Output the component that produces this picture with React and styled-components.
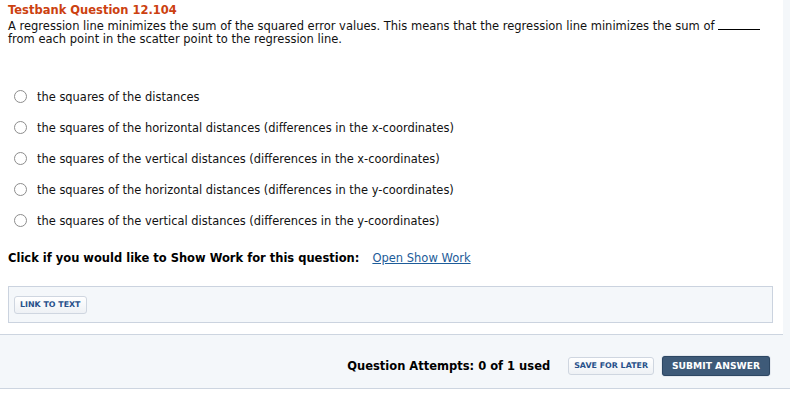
import React from "react";
import styled, { createGlobalStyle } from "styled-components";

const options = [
  "the squares of the distances",
  "the squares of the horizontal distances (differences in the x-coordinates)",
  "the squares of the vertical distances (differences in the x-coordinates)",
  "the squares of the horizontal distances (differences in the y-coordinates)",
  "the squares of the vertical distances (differences in the y-coordinates)",
];

const App = () => {
  return (
    <Page>
      <GlobalStyle />
      <Panel>
        <Title>Testbank Question 12.104</Title>
        <Prompt>
          A regression line minimizes the sum of the squared error values. This
          means that the regression line minimizes the sum of{" "}
          <Blank />
          <br />
          from each point in the scatter point to the regression line.
        </Prompt>
        <Options>
          {options.map((text) => (
            <Option key={text}>
              <Radio type="radio" name="answer" />
              <span>{text}</span>
            </Option>
          ))}
        </Options>
        <ShowWork>
          <strong>Click if you would like to Show Work for this question:</strong>
          <WorkLink href="#">Open Show Work</WorkLink>
        </ShowWork>
        <LinkBox>
          <SmallButton>LINK TO TEXT</SmallButton>
        </LinkBox>
      </Panel>
      <Footer>
        <Attempts>Question Attempts: 0 of 1 used</Attempts>
        <SmallButton>SAVE FOR LATER</SmallButton>
        <SubmitButton>SUBMIT ANSWER</SubmitButton>
      </Footer>
    </Page>
  );
};

const GlobalStyle = createGlobalStyle`
  body {
    margin: 0;
    background: #ffffff;
    font-family: "DejaVu Sans", Verdana, sans-serif;
    color: #000000;
  }
`;

const Page = styled.div`
  width: 790px;
  background: linear-gradient(to bottom, #f4f7fa 0, #f4f7fa 388px, #ffffff 388px);
  min-height: 403px;
`;

const Panel = styled.div`
  width: 783px;
  box-sizing: border-box;
  background: #ffffff;
  border-bottom: 1px solid #cdd5e0;
  padding: 3px 10px 11px 8px;
`;

const Title = styled.div`
  color: #cc4110;
  font-size: 11.5px;
  font-weight: bold;
  line-height: 15px;
`;

const Prompt = styled.div`
  font-size: 11.5px;
  line-height: 13px;
  margin-top: 2px;
  color: #111111;
`;

const Blank = styled.span`
  display: inline-block;
  width: 42px;
  border-bottom: 1px solid #000000;
  vertical-align: baseline;
`;

const Options = styled.div`
  display: flex;
  flex-direction: column;
  margin-top: 35px;
`;

const Option = styled.label`
  display: flex;
  align-items: center;
  gap: 10px;
  height: 31px;
  padding-left: 6px;
  font-size: 11.45px;
  color: #111111;
`;

const Radio = styled.input`
  appearance: none;
  margin: 0;
  width: 13px;
  height: 13px;
  border-radius: 50%;
  border: 1px solid #8d8d8d;
  background: #ffffff;
  box-sizing: border-box;
`;

const ShowWork = styled.div`
  display: flex;
  align-items: center;
  gap: 13px;
  margin-top: 16px;
  font-size: 11.5px;
  line-height: 13px;
`;

const WorkLink = styled.a`
  color: #1d5c99;
  text-decoration: underline;
`;

const LinkBox = styled.div`
  margin-top: 21px;
  height: 37px;
  box-sizing: border-box;
  border: 1px solid #cbd3df;
  background: #f4f7fa;
  padding: 5px 5px;
  width: 765px;
`;

const SmallButton = styled.button`
  font-family: "DejaVu Sans", Verdana, sans-serif;
  font-size: 7.9px;
  font-weight: bold;
  color: #27508a;
  background: linear-gradient(to bottom, #ffffff, #eef1f5);
  border: 1px solid #cfd6e0;
  border-radius: 3px;
  height: 18px;
  padding: 0 5px;
  cursor: pointer;
`;

const Footer = styled.div`
  height: 54px;
  box-sizing: border-box;
  border-bottom: 1px solid #cdd5e0;
  display: flex;
  align-items: center;
  justify-content: flex-end;
  gap: 8px;
  padding-right: 20px;
  padding-top: 8px;
`;

const Attempts = styled.strong`
  font-size: 11.5px;
  margin-right: 10px;
`;

const SubmitButton = styled.button`
  font-family: "DejaVu Sans", Verdana, sans-serif;
  font-size: 9.2px;
  font-weight: bold;
  color: #ffffff;
  background: #3e5a78;
  border: 1px solid #2d4763;
  border-radius: 3px;
  height: 20px;
  padding: 0 9px;
  box-shadow: 0 0 1px #5b7290;
  cursor: pointer;
`;

export default App;
